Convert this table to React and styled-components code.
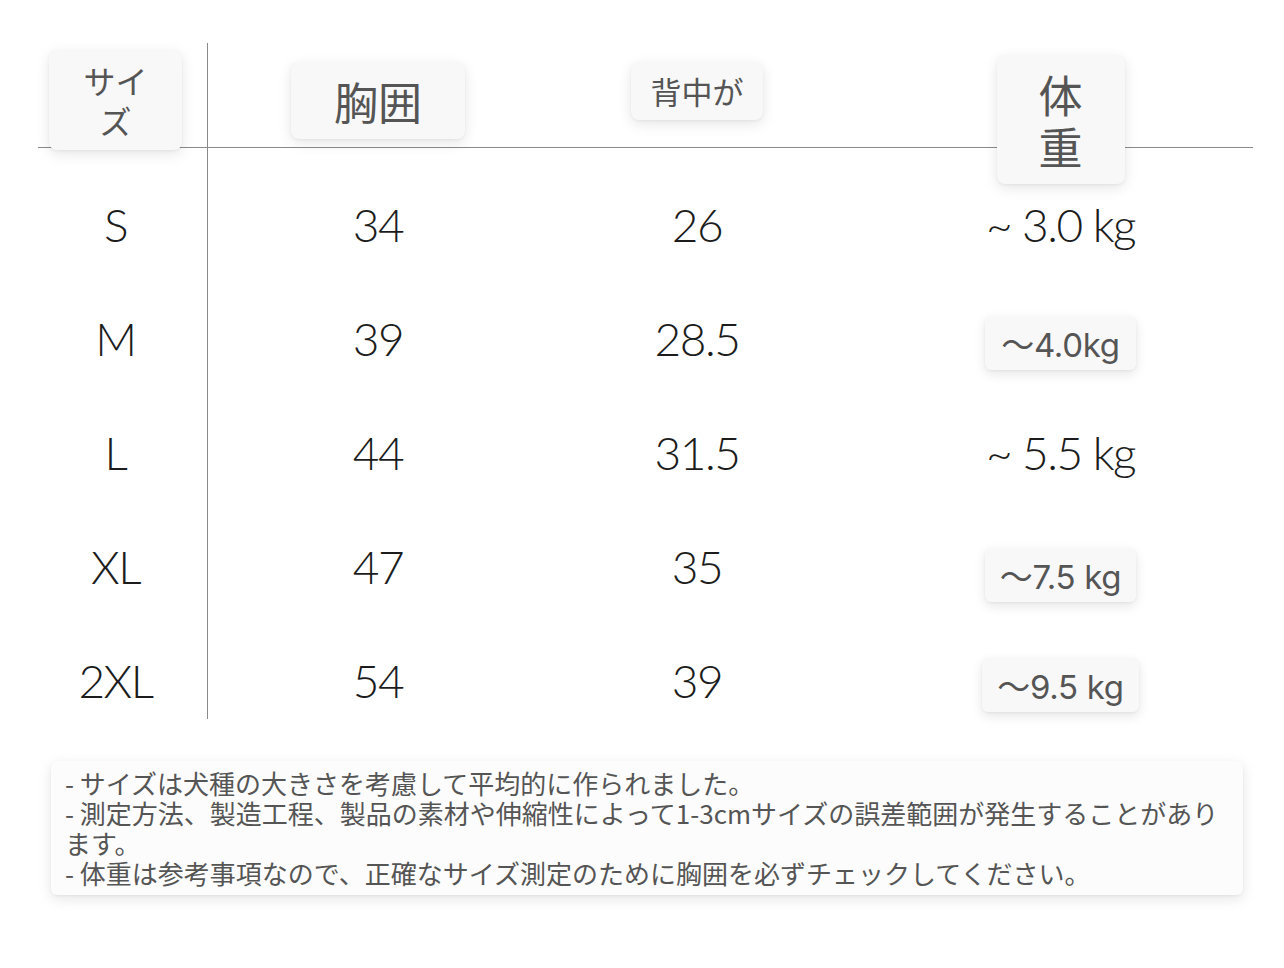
import React from "react";
import styled, { createGlobalStyle } from "styled-components";

const GlobalStyle = createGlobalStyle`
  body {
    margin: 0;
    background: #fff;
    font-family: "Noto Sans CJK JP", sans-serif;
  }
`;

const Page = styled.div`
  width: 1284px;
  height: 968px;
  box-sizing: border-box;
  padding: 43px 0 0 38px;
  overflow: hidden;
`;

const Table = styled.div`
  display: grid;
  grid-template-columns: 170px 340px 298px 407px;
  grid-template-rows: 105px 133px 114px 114px 114px 96px;
`;

const Cell = styled.div`
  display: flex;
  justify-content: center;
  align-items: flex-start;
  min-width: 0;
  box-sizing: border-box;
  padding-top: ${(p) => p.$top || 0}px;
  padding-right: ${(p) => (p.$col === 0 ? 14 : 0)}px;
  padding-left: ${(p) => (p.$col === 3 ? 22 : 0)}px;
  border-right: ${(p) => (p.$col === 0 ? "1px solid #8a8a8a" : "none")};
  border-bottom: ${(p) => (p.$head ? "1px solid #8a8a8a" : "none")};
`;

const HeadBadge = styled.div`
  position: relative;
  z-index: 1;
  display: flex;
  align-items: center;
  justify-content: center;
  flex-shrink: 0;
  box-sizing: border-box;
  width: ${(p) => p.$w}px;
  height: ${(p) => p.$h}px;
  margin-top: ${(p) => p.$mt}px;
  padding: 0 ${(p) => p.$px}px;
  background: #f8f8f8;
  border-radius: 8px;
  box-shadow: 0 4px 14px rgba(0, 0, 0, 0.1), 0 1px 3px rgba(0, 0, 0, 0.05);
  color: #555;
  font-family: "Noto Sans CJK JP", sans-serif;
  font-size: ${(p) => p.$size}px;
  line-height: ${(p) => p.$lh}px;
  text-align: center;
`;

const Value = styled.div`
  display: flex;
  align-items: center;
  justify-content: center;
  height: 114px;
  flex-shrink: 0;
  font-family: Lato, "Noto Sans CJK JP", sans-serif;
  font-weight: 300;
  font-size: 46px;
  letter-spacing: -1.5px;
  color: #1c1c1c;
  white-space: nowrap;
`;

const WeightBadge = styled.div`
  display: flex;
  align-items: center;
  height: 54px;
  padding: 0 ${(p) => p.$px}px;
  transform: translateY(${(p) => p.$shift}px);
  background: #f8f8f8;
  border-radius: 6px;
  box-shadow: 0 4px 12px rgba(0, 0, 0, 0.1), 0 1px 3px rgba(0, 0, 0, 0.05);
  font-family: Inter, "Noto Sans CJK JP", sans-serif;
  font-weight: 400;
  font-size: 33px;
  letter-spacing: -0.3px;
  color: #555;
`;

const Notes = styled.div`
  margin: 42px 0 0 13px;
  width: 1192px;
  box-sizing: border-box;
  padding: 7px 20px 7px 14px;
  background: #fcfcfc;
  border-radius: 6px;
  box-shadow: 0 4px 14px rgba(0, 0, 0, 0.1), 0 1px 3px rgba(0, 0, 0, 0.05);
  color: #555;
  font-family: "Noto Sans CJK JP", sans-serif;
  font-size: 26px;
  line-height: 30px;
`;

const heads = [
  { text: "サイズ", w: 133, h: 100, mt: 7, px: 30, size: 32, lh: 40 },
  { text: "胸囲", w: 174, h: 77, mt: 19, px: 20, size: 44, lh: 52 },
  { text: "背中が", w: 132, h: 58, mt: 19, px: 10, size: 31, lh: 40 },
  { text: "体重", w: 128, h: 129, mt: 12, px: 30, size: 44, lh: 52 },
];

const rows = [
  { size: "S", chest: "34", back: "26", weight: "~ 3.0 kg" },
  { size: "M", chest: "39", back: "28.5", weight: "～4.0kg", badge: 5, px: 16 },
  { size: "L", chest: "44", back: "31.5", weight: "~ 5.5 kg" },
  { size: "XL", chest: "47", back: "35", weight: "～7.5 kg", badge: 9, px: 15 },
  { size: "2XL", chest: "54", back: "39", weight: "～9.5 kg", badge: 5, px: 15 },
];

export default function App() {
  return (
    <>
      <GlobalStyle />
      <Page>
        <Table>
          {heads.map((h, i) => (
            <Cell key={h.text} $col={i} $head>
              <HeadBadge $w={h.w} $h={h.h} $mt={h.mt} $px={h.px} $size={h.size} $lh={h.lh}>
                {h.text}
              </HeadBadge>
            </Cell>
          ))}
          {rows.map((r, ri) =>
            [r.size, r.chest, r.back, r.weight].map((v, ci) => (
              <Cell key={r.size + ci} $col={ci} $top={ri === 0 ? 19 : 0}>
                <Value>
                  {ci === 3 && r.badge ? (
                    <WeightBadge $shift={r.badge} $px={r.px}>
                      {v}
                    </WeightBadge>
                  ) : (
                    v
                  )}
                </Value>
              </Cell>
            ))
          )}
        </Table>
        <Notes>
          - サイズは犬種の大きさを考慮して平均的に作られました。
          <br />
          - 測定方法、製造工程、製品の素材や伸縮性によって1-3cmサイズの誤差範囲が発生することがあります。
          <br />
          - 体重は参考事項なので、正確なサイズ測定のために胸囲を必ずチェックしてください。
        </Notes>
      </Page>
    </>
  );
}
